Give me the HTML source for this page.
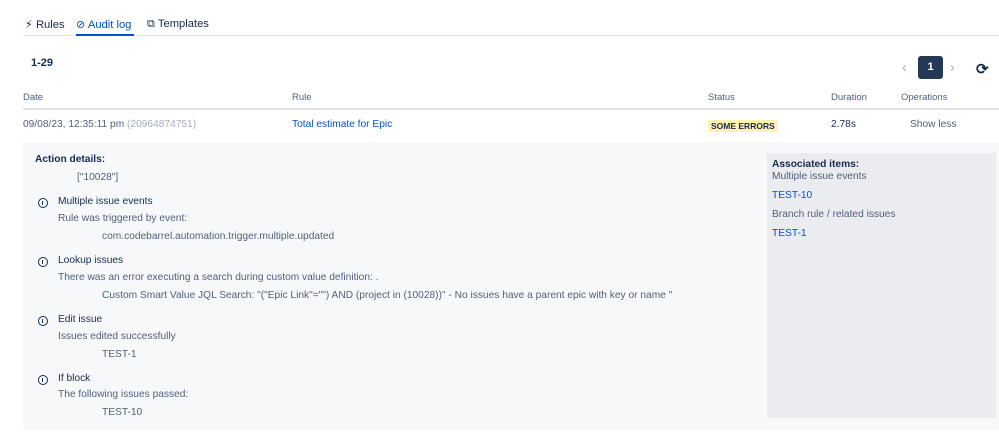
<!DOCTYPE html>
<html><head><style>
*{margin:0;padding:0;box-sizing:border-box}
body{width:999px;height:437px;background:#fff;font-family:"Liberation Sans",sans-serif;font-size:10.2px;color:#505f79;position:relative;overflow:hidden}
.a{position:absolute;white-space:nowrap}
.t{color:#172b4d}
.l{color:#0052cc}
.i{position:absolute;width:10px;height:10px;border:1.3px solid #172b4d;border-radius:50%}
.i:after{content:"";position:absolute;left:3px;top:2px;width:1.3px;height:4px;background:#172b4d}
</style></head><body>
<div class="a t" style="left:25px;top:18px;font-size:11.2px">⚡&#xFE0E; Rules</div>
<div class="a" style="left:76px;top:18px;font-size:11.2px;color:#0052cc">⊘ Audit log</div>
<div class="a t" style="left:147px;top:18px;font-size:11.2px">⧉ Templates</div>
<div class="a" style="left:23px;top:35px;width:976px;height:1px;background:#dfe1e6"></div>
<div class="a" style="left:76px;top:34px;width:58px;height:2px;background:#0052cc"></div>
<div class="a t" style="left:31px;top:57px;font-weight:bold;font-size:11px">1-29</div>
<div class="a" style="left:902px;top:59px;color:#a5adba;font-size:14px">‹</div>
<div class="a" style="left:918px;top:56px;width:25px;height:23px;background:#253858;border-radius:3px;color:#fff;font-weight:bold;text-align:center;line-height:23px;font-size:11px">1</div>
<div class="a" style="left:950px;top:59px;color:#a5adba;font-size:14px">›</div>
<div class="a t" style="left:976px;top:60px;font-size:15px;font-weight:bold">⟳</div>
<div class="a" style="left:23px;top:92px;font-size:9.5px">Date</div>
<div class="a" style="left:292px;top:92px;font-size:9.5px">Rule</div>
<div class="a" style="left:708px;top:92px;font-size:9.5px">Status</div>
<div class="a" style="left:831px;top:92px;font-size:9.5px">Duration</div>
<div class="a" style="left:901px;top:92px;font-size:9.5px">Operations</div>
<div class="a" style="left:23px;top:108px;width:976px;height:1.5px;background:#dfe1e6"></div>
<div class="a" style="left:23px;top:119px">09/08/23, 12:35:11 pm <span style="color:#a5adba">(20964874751)</span></div>
<div class="a l" style="left:292px;top:119px">Total estimate for Epic</div>
<div class="a t" style="left:708px;top:120px;background:#fff0b3;font-size:8.5px;font-weight:bold;padding:1px 3px;border-radius:2px">SOME ERRORS</div>
<div class="a t" style="left:831px;top:119px">2.78s</div>
<div class="a" style="left:910px;top:119px">Show less</div>
<div class="a" style="left:23px;top:142px;width:976px;height:288px;background:#f7f8fa"></div>
<div class="a" style="left:767px;top:153px;width:229px;height:265px;background:#ebecf0"></div>
<div class="a t" style="left:35px;top:154px;font-weight:bold">Action details:</div>
<div class="a" style="left:77px;top:172px">["10028"]</div>
<div class="i" style="left:38px;top:198px"></div>
<div class="a t" style="left:58px;top:196px">Multiple issue events</div>
<div class="a" style="left:58px;top:213px">Rule was triggered by event:</div>
<div class="a" style="left:102px;top:231px">com.codebarrel.automation.trigger.multiple.updated</div>
<div class="i" style="left:38px;top:257px"></div>
<div class="a t" style="left:58px;top:255px">Lookup issues</div>
<div class="a" style="left:58px;top:272px">There was an error executing a search during custom value definition: .</div>
<div class="a" style="left:102px;top:290px">Custom Smart Value JQL Search: "("Epic Link"="") AND (project in (10028))" - No issues have a parent epic with key or name ''</div>
<div class="i" style="left:38px;top:316px"></div>
<div class="a t" style="left:58px;top:314px">Edit issue</div>
<div class="a" style="left:58px;top:331px">Issues edited successfully</div>
<div class="a" style="left:102px;top:349px">TEST-1</div>
<div class="i" style="left:38px;top:375px"></div>
<div class="a t" style="left:58px;top:373px">If block</div>
<div class="a" style="left:58px;top:389px">The following issues passed:</div>
<div class="a" style="left:102px;top:407px">TEST-10</div>
<div class="a t" style="left:772px;top:159px;font-weight:bold">Associated items:</div>
<div class="a" style="left:772px;top:171px">Multiple issue events</div>
<div class="a l" style="left:772px;top:190px">TEST-10</div>
<div class="a" style="left:772px;top:209px">Branch rule / related issues</div>
<div class="a l" style="left:772px;top:228px">TEST-1</div>
</body></html>
